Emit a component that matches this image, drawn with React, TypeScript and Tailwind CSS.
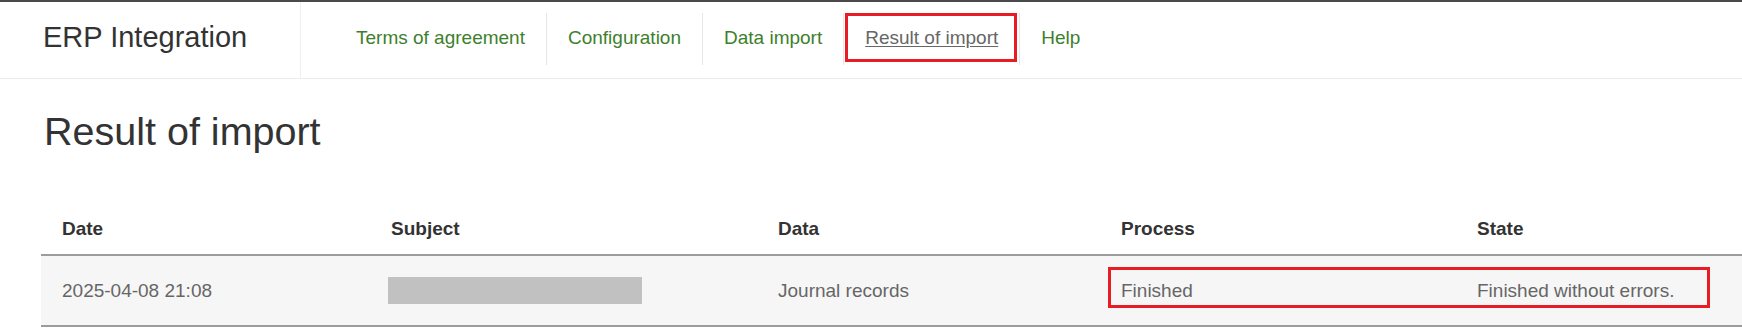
const navItems = [
  { label: "Terms of agreement" },
  { label: "Configuration" },
  { label: "Data import" },
  { label: "Result of import", active: true },
  { label: "Help", last: true },
];

const columns = ["Date", "Subject", "Data", "Process", "State"];

/**
 * ERP integration page — import result view.
 * Red rectangles are review annotations drawn over the UI.
 */
export default function App() {
  return (
    <div className="min-h-screen bg-white font-['Liberation_Sans',Arial,sans-serif]">
      <div className="h-[2px] bg-[#4a4a4a]" />

      <header className="flex h-[77px] border-b border-[#ececec]">
        <div className="flex h-full w-[301px] shrink-0 items-center border-r border-[#efefef] pb-[5px] pl-[43px]">
          <span className="text-[29px] leading-none text-[#333]">ERP Integration</span>
        </div>

        <nav className="ml-[34px] mt-[11px] flex h-[52px]">
          {navItems.map((item) => (
            <div
              key={item.label}
              className={
                "relative flex items-center px-[21px] pb-[3px] text-[19px] leading-none " +
                (item.last ? "" : "border-r border-[#e6e6e6]")
              }
            >
              {item.active ? (
                <>
                  <span className="text-[#666] underline underline-offset-[2px]">{item.label}</span>
                  <span className="pointer-events-none absolute bottom-[3px] left-px right-[2px] top-0 border-[3px] border-[#e81c24]" />
                </>
              ) : (
                <span className="text-[#3d7f2d]">{item.label}</span>
              )}
            </div>
          ))}
        </nav>
      </header>

      <h1 className="ml-[44px] mt-[33px] text-[39.5px] font-normal leading-none text-[#333]">
        Result of import
      </h1>

      <div className="ml-[41px] mt-[60px]">
        <div className="grid h-[44px] grid-cols-[329px_387px_343px_356px_1fr] items-end border-b-2 border-[#9c9c9c]">
          {columns.map((c) => (
            <div key={c} className="px-[21px] pb-[16px] text-[19px] font-bold leading-none text-[#333]">
              {c}
            </div>
          ))}
        </div>

        <div className="relative grid h-[71px] grid-cols-[329px_387px_343px_356px_1fr] items-center border-b-2 border-[#9c9c9c] bg-[#f6f6f6] text-[19px] leading-none text-[#666]">
          <div className="px-[21px]">2025-04-08 21:08</div>
          <div className="px-[21px]">
            <div className="-ml-[3px] h-[27px] w-[254px] bg-[#c1c1c1]" />
          </div>
          <div className="px-[21px]">Journal records</div>
          <div className="px-[21px]">Finished</div>
          <div className="px-[21px]">Finished without errors.</div>

          <span className="pointer-events-none absolute left-[1067px] top-[11px] h-[41px] w-[602px] border-[3px] border-[#e81c24]" />
        </div>
      </div>
    </div>
  );
}
